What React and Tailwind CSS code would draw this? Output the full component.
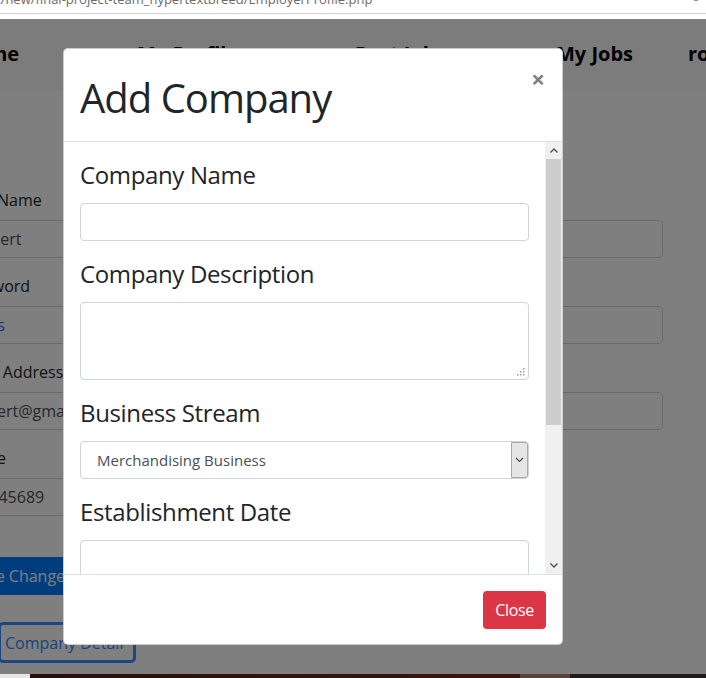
import React from 'react';

const font = "font-['Open_Sans','Noto_Sans',sans-serif]";

const navItems = [
    { label: 'Home', w: 'w-[177px]' },
    { label: 'My Profile', w: 'w-[218px]' },
    { label: 'Post Job', w: 'w-[201px]' },
    { label: 'My Jobs', w: 'w-[132px]' },
    { label: 'role', w: 'w-[80px]' },
];

const leftFields = [
    { label: 'User Name', value: 'Robert' },
    { label: 'Password', value: 'pass', blue: true },
    { label: 'Email Address', value: 'robert@gmail.com' },
    { label: 'Phone', value: '12345689' },
];

const rightFields = ['Company', 'Position', 'Location'];

const FormGroup = ({ label, value, blue }) => (
    <div className="mb-4">
        <div className="mb-2 whitespace-nowrap text-[16px] leading-[24px] text-[#212529]">{label}</div>
        <div className="flex h-[38px] items-center overflow-hidden whitespace-nowrap rounded border border-[#ced4da] px-3 text-[16px] text-[#495057]">
            <span className={blue ? 'text-[#1a73e8]' : ''}>{value}</span>
        </div>
    </div>
);

const ModalLabel = ({ children }) => (
    <div className="mb-[14px] pt-[2px] text-[24px] leading-[29px] tracking-[-0.015em] text-[#212529]">{children}</div>
);

const Scrollbar = () => (
    <div className="flex w-[17px] shrink-0 flex-col bg-[#f0f0f0]">
        <div className="flex h-[17px] items-center justify-center">
            <svg width="8" height="5" viewBox="0 0 8 5">
                <path d="M0.5 4.5 L4 1 L7.5 4.5" fill="none" stroke="#505050" strokeWidth="1.4" />
            </svg>
        </div>
        <div className="mx-[1px] h-[266px] bg-[#cdcdcd]" />
        <div className="flex-1" />
        <div className="flex h-[17px] items-center justify-center">
            <svg width="8" height="5" viewBox="0 0 8 5">
                <path d="M0.5 0.5 L4 4 L7.5 0.5" fill="none" stroke="#505050" strokeWidth="1.4" />
            </svg>
        </div>
    </div>
);

const App = () => {
    return (
        <div className={`relative h-[678px] w-[706px] overflow-hidden bg-white ${font}`}>
            {/* browser address strip */}
            <div className="h-[19px] bg-white">
                <div className="flex h-[14px] items-start justify-between overflow-hidden border-b border-[#cfcfcf]">
                    <span className="-ml-[4px] -mt-[9px] whitespace-nowrap text-[13px] leading-[17px] text-[#6b6b6b]">
                        t/new/final-project-team_hypertextbreed/EmployerProfile.php
                    </span>
                    <div className="-mt-[10px] flex items-start gap-[10px] pr-[2px]">
                        <span className="text-[16px] leading-[14px] text-[#555]">···</span>
                        <svg width="16" height="14" viewBox="0 0 16 14">
                            <circle cx="8" cy="4" r="6" fill="none" stroke="#555" strokeWidth="1.4" />
                        </svg>
                    </div>
                </div>
            </div>

            {/* page under the backdrop */}
            <div className="h-[655px] overflow-hidden bg-white">
                <nav className="flex h-[71px] bg-[#f8f9fa] pt-[20px]">
                    <div className="-ml-[40px] flex">
                        {navItems.map((item) => (
                            <span key={item.label} className={`${item.w} shrink-0 whitespace-nowrap text-[20px] font-bold leading-[30px] text-black`}>
                                {item.label}
                            </span>
                        ))}
                    </div>
                </nav>

                <div className="-ml-[42px] w-[705px] pt-[98px]">
                    <div className="grid grid-cols-2 gap-[30px]">
                        <div>
                            {leftFields.map((f) => (
                                <FormGroup key={f.label} {...f} />
                            ))}
                        </div>
                        <div>
                            {rightFields.map((label) => (
                                <FormGroup key={label} label={label} value="" />
                            ))}
                        </div>
                    </div>
                    <button className="mt-[25px] flex h-[38px] items-center rounded bg-[#007bff] px-3 text-[16px] text-white">
                        Save Changes
                    </button>
                    <button className="ml-[40px] mt-[27px] flex h-[41px] items-center rounded-[5px] border-[3px] border-[#3f8fff] pl-[4px] pr-[10px] text-[16px] text-[#2f86ff]">
                        Company Detail
                    </button>
                </div>
            </div>

            {/* taskbar strip */}
            <div className="flex h-[4px]">
                <div className="w-[30px] bg-[#e6e6e6]" />
                <div className="w-[490px] bg-gradient-to-r from-[#2a0e0a] to-[#3a170e]" />
                <div className="w-[50px] bg-[#5a423b]" />
                <div className="flex-1 bg-[#1f1b1d]" />
            </div>

            {/* backdrop */}
            <div className="absolute inset-x-0 top-[19px] h-[655px] bg-black/50" />

            {/* modal */}
            <div className="absolute left-[63px] top-[48px] flex h-[597px] w-[500px] flex-col overflow-hidden rounded-[5px] border border-black/20 bg-white">
                <div className="flex h-[93px] shrink-0 items-start justify-between border-b border-[#dee2e6] pl-4 pr-[17px]">
                    <h1 className="pt-[25px] text-[40px] leading-[48px] tracking-[-0.025em] text-[#212529]">Add Company</h1>
                    <button className="mt-[18px] text-[24px] font-bold leading-[24px] text-[#808080]">×</button>
                </div>

                <div className="flex min-h-0 flex-1">
                    <div className="min-w-0 flex-1 overflow-hidden px-4 pt-4">
                        <ModalLabel>Company Name</ModalLabel>
                        <div className="mb-4 h-[38px] rounded border border-[#ced4da]" />

                        <ModalLabel>Company Description</ModalLabel>
                        <div className="mb-4 flex h-[78px] items-end justify-end rounded border border-[#ced4da] p-[3px]">
                            <svg width="8" height="8" viewBox="0 0 8 8">
                                <rect x="6" y="0" width="1.5" height="1.5" fill="#9a9a9a" />
                                <rect x="3" y="3" width="1.5" height="1.5" fill="#9a9a9a" />
                                <rect x="6" y="3" width="1.5" height="1.5" fill="#9a9a9a" />
                                <rect x="0" y="6" width="1.5" height="1.5" fill="#9a9a9a" />
                                <rect x="3" y="6" width="1.5" height="1.5" fill="#9a9a9a" />
                                <rect x="6" y="6" width="1.5" height="1.5" fill="#9a9a9a" />
                            </svg>
                        </div>

                        <ModalLabel>Business Stream</ModalLabel>
                        <div className="mb-4 flex h-[38px] items-stretch rounded border border-[#ced4da]">
                            <span className="flex flex-1 items-center pl-[16px] text-[15px] text-[#495057]">Merchandising Business</span>
                            <span className="flex w-[17px] items-center justify-center rounded-r-[3px] border border-[#a9a9a9] bg-[#e5e5e5]">
                                <svg width="9" height="6" viewBox="0 0 9 6">
                                    <path d="M1 1 L4.5 4.5 L8 1" fill="none" stroke="#4a4a4a" strokeWidth="1.2" />
                                </svg>
                            </span>
                        </div>

                        <ModalLabel>Establishment Date</ModalLabel>
                        <div className="h-[38px] rounded border border-[#ced4da]" />
                    </div>
                    <Scrollbar />
                </div>

                <div className="flex h-[70px] shrink-0 items-start justify-end border-t border-[#dee2e6] pr-[16px] pt-4">
                    <button className="h-[38px] rounded bg-[#dc3545] px-3 text-[16px] tracking-[-0.02em] text-white">Close</button>
                </div>
            </div>
        </div>
    );
};

export default App;
